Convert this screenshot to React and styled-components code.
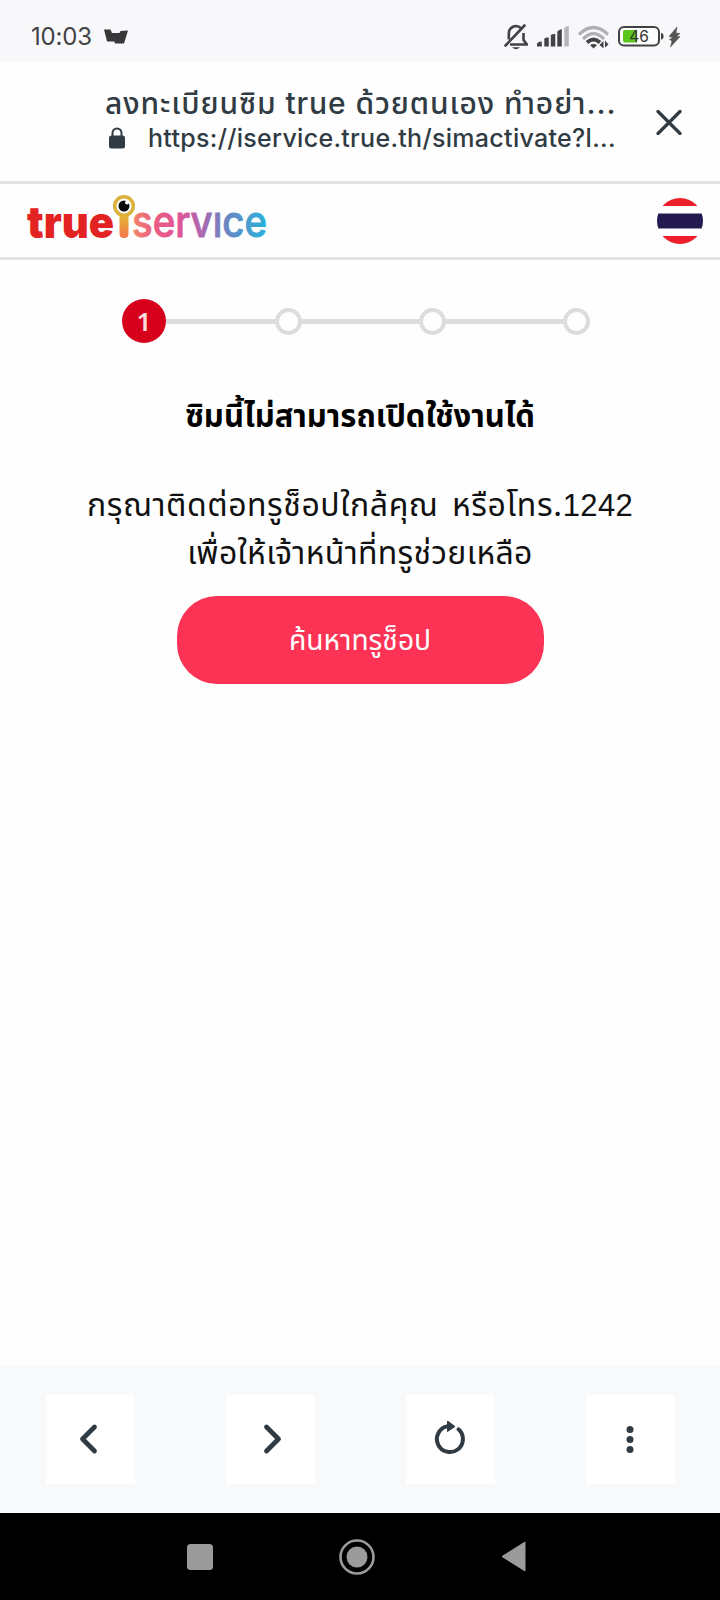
import React from 'react';
import styled, { createGlobalStyle } from 'styled-components';

const COLORS = {
  ink: '#303b43',
  status: '#424244',
  bar: '#f8f9fb',
  line: '#e2e2e2',
  step: '#dcdcdc',
  red: '#d6001c',
  pink: '#fd3355',
  nav: '#9b9b9b',
};

const GlobalStyle = createGlobalStyle`
  * {
    box-sizing: border-box;
  }
  body {
    margin: 0;
    background: #fefefe;
    font-family: Inter, 'Noto Sans Thai', 'Noto Sans', sans-serif;
  }
  svg {
    display: block;
    flex: none;
  }
`;

const Screen = styled.div`
  display: flex;
  flex-direction: column;
  width: 720px;
  height: 1600px;
  overflow: hidden;
`;

const StatusBar = styled.div`
  display: flex;
  align-items: center;
  justify-content: space-between;
  flex: none;
  height: 62px;
  padding: 11px 40px 0 31px;
  background: #f8f8fb;
  color: ${COLORS.status};
`;

const Clock = styled.span`
  font-size: 24px;
  line-height: 30px;
  letter-spacing: -0.2px;
`;

const StatusGroup = styled.div`
  display: flex;
  align-items: center;
  gap: ${(props) => props.$gap}px;
`;

const AddressBar = styled.header`
  display: flex;
  align-items: center;
  flex: none;
  height: 122px;
  padding: 0 37px 0 105px;
  border-bottom: 3px solid ${COLORS.line};
  color: ${COLORS.ink};
`;

const PageInfo = styled.div`
  width: 510px;
  margin-right: 41px;
  padding-bottom: 4px;
  font-weight: 500;
  white-space: nowrap;
`;

const PageTitle = styled.div`
  font-size: 30px;
  line-height: 34px;
  height: 36px;
  letter-spacing: 0.9px;
`;

const PageUrl = styled.div`
  display: flex;
  align-items: center;
  gap: 23px;
  padding-left: 4px;
  font-size: 25px;
  line-height: 32px;
  letter-spacing: 0.3px;
`;

const SiteHeader = styled.div`
  display: flex;
  align-items: center;
  justify-content: space-between;
  flex: none;
  height: 76px;
  padding: 0 17.5px 0 24px;
  border-bottom: 3px solid ${COLORS.line};
`;

const Content = styled.main`
  display: flex;
  flex-direction: column;
  align-items: center;
  flex: 1;
  padding-top: 39px;
`;

const Stepper = styled.div`
  display: flex;
  align-items: center;
  height: 44px;
  margin-right: 8px;
`;

const ActiveStep = styled.div`
  width: 44px;
  height: 44px;
  border-radius: 50%;
  background: ${COLORS.red};
  color: #ffd9dc;
  font-family: 'Noto Sans', sans-serif;
  font-size: 26px;
  font-weight: 600;
  line-height: 45px;
  text-align: center;
`;

const Step = styled.div`
  width: 27px;
  height: 27px;
  border: 4px solid ${COLORS.step};
  border-radius: 50%;
`;

const StepLine = styled.div`
  width: ${(props) => (props.$first ? 109 : 117)}px;
  height: 5px;
  background: ${COLORS.step};
`;

const Heading = styled.h1`
  margin: 48px 0 0;
  color: #000;
  font-size: 31px;
  font-weight: 700;
  line-height: 50px;
  white-space: nowrap;
`;

const Message = styled.p`
  margin: 40px 0 0;
  color: #111;
  font-size: 32px;
  line-height: 48px;
  text-align: center;
  white-space: nowrap;
`;

const MessageLine = styled.span`
  display: block;
  height: 48px;
  letter-spacing: ${(props) => props.$spacing}px;
  word-spacing: 4px;
`;

const Phone = styled.span`
  font-family: 'Liberation Sans', sans-serif;
  font-size: 31px;
  letter-spacing: 0.3px;
`;

const ShopButton = styled.button`
  width: 367px;
  height: 88px;
  margin-top: 19px;
  padding: 2px 0 0;
  border: 0;
  border-radius: 40px;
  background: ${COLORS.pink};
  color: #fff;
  font-family: inherit;
  font-size: 28.2px;
`;

const Toolbar = styled.div`
  display: grid;
  grid-template-columns: repeat(4, 180px);
  place-items: center;
  flex: none;
  height: 148px;
  background: ${COLORS.bar};
`;

const ToolButton = styled.button`
  display: flex;
  align-items: center;
  justify-content: center;
  width: 89px;
  height: 89px;
  padding: 0;
  border: 0;
  border-radius: 2px;
  background: #fff;
`;

const SystemNav = styled.div`
  display: flex;
  align-items: center;
  flex: none;
  gap: 126px;
  height: 87px;
  padding-left: 187px;
  background: #000;
`;

const NotifyIcon = () => (
  <svg width="24" height="15" viewBox="0 0 24 15" fill="#38383a">
    <path d="M0 .5h6.500l1.500 3.500h7.500L16.500 2l7.500-.5L20 14.500h-9l-.8-2H3z" />
  </svg>
);

const BellOffIcon = () => (
  <svg width="24" height="26" viewBox="0 0 24 26" fill="none" stroke={COLORS.status} strokeWidth="2.600">
    <path d="M6 20.500h17L19.500 16V9M4.800 15.500V9.500Q5 2.800 12 2q3 .2 4.800 2" />
    <path d="M20.500 1.500 1.500 21.500" strokeLinecap="round" />
    <path d="M8 23.300h8q-4 4-8 0z" fill={COLORS.status} stroke="none" />
  </svg>
);

const SignalIcon = () => (
  <svg width="32" height="21" viewBox="0 0 32 21" fill={COLORS.status}>
    <path d="M0 20.500v-3q2-2.500 4.800-2v5zM7.300 12.500q2-1.500 4.500-1v9H7.300zM13.800 9q2-1.500 4.500-1v12.500h-4.500zM20.300 5.500q2-2 4.500-2.500v17.500h-4.500z" />
    <path d="M27.300 2q2-2 4.500-2v20.500h-4.500z" fill="#b5b5b8" />
  </svg>
);

const WifiIcon = () => (
  <svg width="31" height="24" viewBox="0 0 31 24" fill="none">
    <path d="M1 9.500Q15.500-4.500 30 9.500M5 14Q15.500 3.500 26 14" stroke="#b0b0b3" strokeWidth="3.200" />
    <path d="M9 17.500q6.500-6 13 0" stroke={COLORS.status} strokeWidth="4" />
    <path d="M12 20q3.500-2 7 0L15.500 23.500zM25.500 16v7.500L21.500 20zM27 15.500l3.500 4L27 22.500z" fill={COLORS.status} />
  </svg>
);

const BatteryIcon = () => (
  <svg width="46" height="21" viewBox="0 0 46 21">
    <rect x="1" y="1" width="40" height="18.500" rx="5" fill="#fdfdfd" stroke={COLORS.status} strokeWidth="2" />
    <path d="M5 6q0-2 2-2h12v12.500H7q-2 0-2-2z" fill="#5cc51c" />
    <path d="M43 7q2.500 0 2.500 3.200T43 13.500z" fill={COLORS.status} />
    <text x="21" y="16" textAnchor="middle" fontFamily="Inter, sans-serif" fontSize="15.500" fill="#333">
      46
    </text>
  </svg>
);

const Bolt = styled.svg`
  margin-left: -4px;
`;

const BoltIcon = () => (
  <Bolt width="11" height="20" viewBox="0 0 11 20" fill="#555557">
    <path d="M8 0 0 9.500l4 1L.5 12.500 3 14l-1.500 6L11 9.500H7.500L11 6.500 7 6z" stroke="#555557" strokeWidth=".6" />
  </Bolt>
);

const LockIcon = () => (
  <svg width="16" height="22" viewBox="0 0 16 22">
    <path d="M3.500 9V6a4.500 4.500 0 0 1 9 0v3" fill="none" stroke={COLORS.ink} strokeWidth="2" />
    <rect y="8.500" width="16" height="13" rx="2.500" fill={COLORS.ink} />
  </svg>
);

const CloseIcon = () => (
  <svg width="26" height="26" viewBox="0 0 26 26">
    <path d="m2 2.500 22 22M24 2.500 2 24.500" stroke={COLORS.ink} strokeWidth="3.200" strokeLinecap="round" />
  </svg>
);

const Logo = () => (
  <svg width="300" height="73" viewBox="24 184 300 73">
    <defs>
      <linearGradient id="service" gradientUnits="userSpaceOnUse" x1="133" y1="0" x2="267" y2="0">
        <stop offset="0" stopColor="#f0876b" />
        <stop offset="0.160" stopColor="#ea5c80" />
        <stop offset="0.350" stopColor="#df5599" />
        <stop offset="0.520" stopColor="#a968b0" />
        <stop offset="0.700" stopColor="#6b86c4" />
        <stop offset="1" stopColor="#28b2dc" />
      </linearGradient>
      <linearGradient id="stem" x1="0" y1="0" x2="0" y2="1">
        <stop offset="0" stopColor="#e3b92f" />
        <stop offset="1" stopColor="#f5774f" />
      </linearGradient>
    </defs>
    <text x="27" y="237.500" textLength="87" lengthAdjust="spacingAndGlyphs" fontFamily="Inter, sans-serif" fontWeight="900" fontSize="44" fill="#e32222">
      true
    </text>
    <path d="M119.500 214h9v20q0 4-4.500 4t-4.500-4z" fill="url(#stem)" />
    <circle cx="124" cy="206" r="9.300" fill="#fff" stroke="#dcb23c" strokeWidth="3.500" />
    <circle cx="124" cy="206" r="5.500" fill="#0a0a0a" />
    <circle cx="127" cy="202.500" r="2" fill="#fff" />
    <text x="132" y="237" textLength="135" lengthAdjust="spacingAndGlyphs" fontFamily="Inter, sans-serif" fontWeight="500" fontSize="44" fill="url(#service)" stroke="url(#service)" strokeWidth="0.900" strokeLinejoin="round">
      {'serv\u0131ce'}
    </text>
  </svg>
);

const FlagIcon = () => (
  <svg width="46" height="46" viewBox="0 0 46 46">
    <clipPath id="flag">
      <circle cx="23" cy="23" r="23" />
    </clipPath>
    <g clipPath="url(#flag)">
      <path d="M0 0h46v46H0z" fill="#fff" />
      <path d="M0 0h46v8H0zM0 38h46v8H0z" fill="#ec1f2a" />
      <path d="M0 15.500h46v15H0z" fill="#241a50" />
    </g>
  </svg>
);

const ChevronIcon = ({ d }) => (
  <svg width="36" height="36" viewBox="0 0 36 36">
    <path d={d} fill="none" stroke={COLORS.ink} strokeWidth="4.800" strokeLinecap="round" strokeLinejoin="round" />
  </svg>
);

const ReloadIcon = () => (
  <svg width="36" height="36" viewBox="0 0 36 36">
    <path d="M26.500 8.300A13 13 0 1 1 15 5.400" fill="none" stroke={COLORS.ink} strokeWidth="4" strokeLinecap="round" />
    <path d="M15.500 0v10.500l7.500-5z" fill={COLORS.ink} stroke={COLORS.ink} strokeLinejoin="round" />
  </svg>
);

const MoreIcon = () => (
  <svg width="36" height="36" viewBox="0 0 36 36" fill={COLORS.ink}>
    <circle cx="18" cy="8.500" r="3.500" />
    <circle cx="18" cy="18.500" r="3.500" />
    <circle cx="18" cy="28.500" r="3.500" />
  </svg>
);

const App = () => {
  return (
    <>
      <GlobalStyle />
      <Screen>
        <StatusBar>
          <StatusGroup $gap={12}>
            <Clock>10:03</Clock>
            <NotifyIcon />
          </StatusGroup>
          <StatusGroup $gap={9}>
            <BellOffIcon />
            <SignalIcon />
            <WifiIcon />
            <BatteryIcon />
            <BoltIcon />
          </StatusGroup>
        </StatusBar>
        <AddressBar>
          <PageInfo>
            <PageTitle>ลงทะเบียนซิม true ด้วยตนเอง ทำอย่า...</PageTitle>
            <PageUrl>
              <LockIcon />
              https://iservice.true.th/simactivate?l...
            </PageUrl>
          </PageInfo>
          <CloseIcon />
        </AddressBar>
        <SiteHeader>
          <Logo />
          <FlagIcon />
        </SiteHeader>
        <Content>
          <Stepper>
            <ActiveStep>1</ActiveStep>
            <StepLine $first />
            <Step />
            <StepLine />
            <Step />
            <StepLine />
            <Step />
          </Stepper>
          <Heading>ซิมนี้ไม่สามารถเปิดใช้งานได้</Heading>
          <Message>
            <MessageLine $spacing={0.55}>
              กรุณาติดต่อทรูช็อปใกล้คุณ หรือโทร.<Phone>1242</Phone>
            </MessageLine>
            <MessageLine $spacing={0.3}>เพื่อให้เจ้าหน้าที่ทรูช่วยเหลือ</MessageLine>
          </Message>
          <ShopButton>ค้นหาทรูช็อป</ShopButton>
        </Content>
        <Toolbar>
          <ToolButton>
            <ChevronIcon d="M22.500 6 10.500 18 22.500 30" />
          </ToolButton>
          <ToolButton>
            <ChevronIcon d="M14.500 6 26.500 18 14.500 30" />
          </ToolButton>
          <ToolButton>
            <ReloadIcon />
          </ToolButton>
          <ToolButton>
            <MoreIcon />
          </ToolButton>
        </Toolbar>
        <SystemNav>
          <svg width="26" height="26" viewBox="0 0 26 26">
            <rect width="26" height="26" rx="3.500" fill={COLORS.nav} />
          </svg>
          <svg width="36" height="36" viewBox="0 0 36 36">
            <circle cx="18" cy="18" r="16.500" fill="none" stroke={COLORS.nav} strokeWidth="2.600" />
            <circle cx="18" cy="18" r="10.500" fill={COLORS.nav} />
          </svg>
          <svg width="25" height="31" viewBox="0 0 25 31">
            <path d="M24 1v29L1 15.500z" fill={COLORS.nav} stroke={COLORS.nav} strokeLinejoin="round" />
          </svg>
        </SystemNav>
      </Screen>
    </>
  );
};

export default App;
